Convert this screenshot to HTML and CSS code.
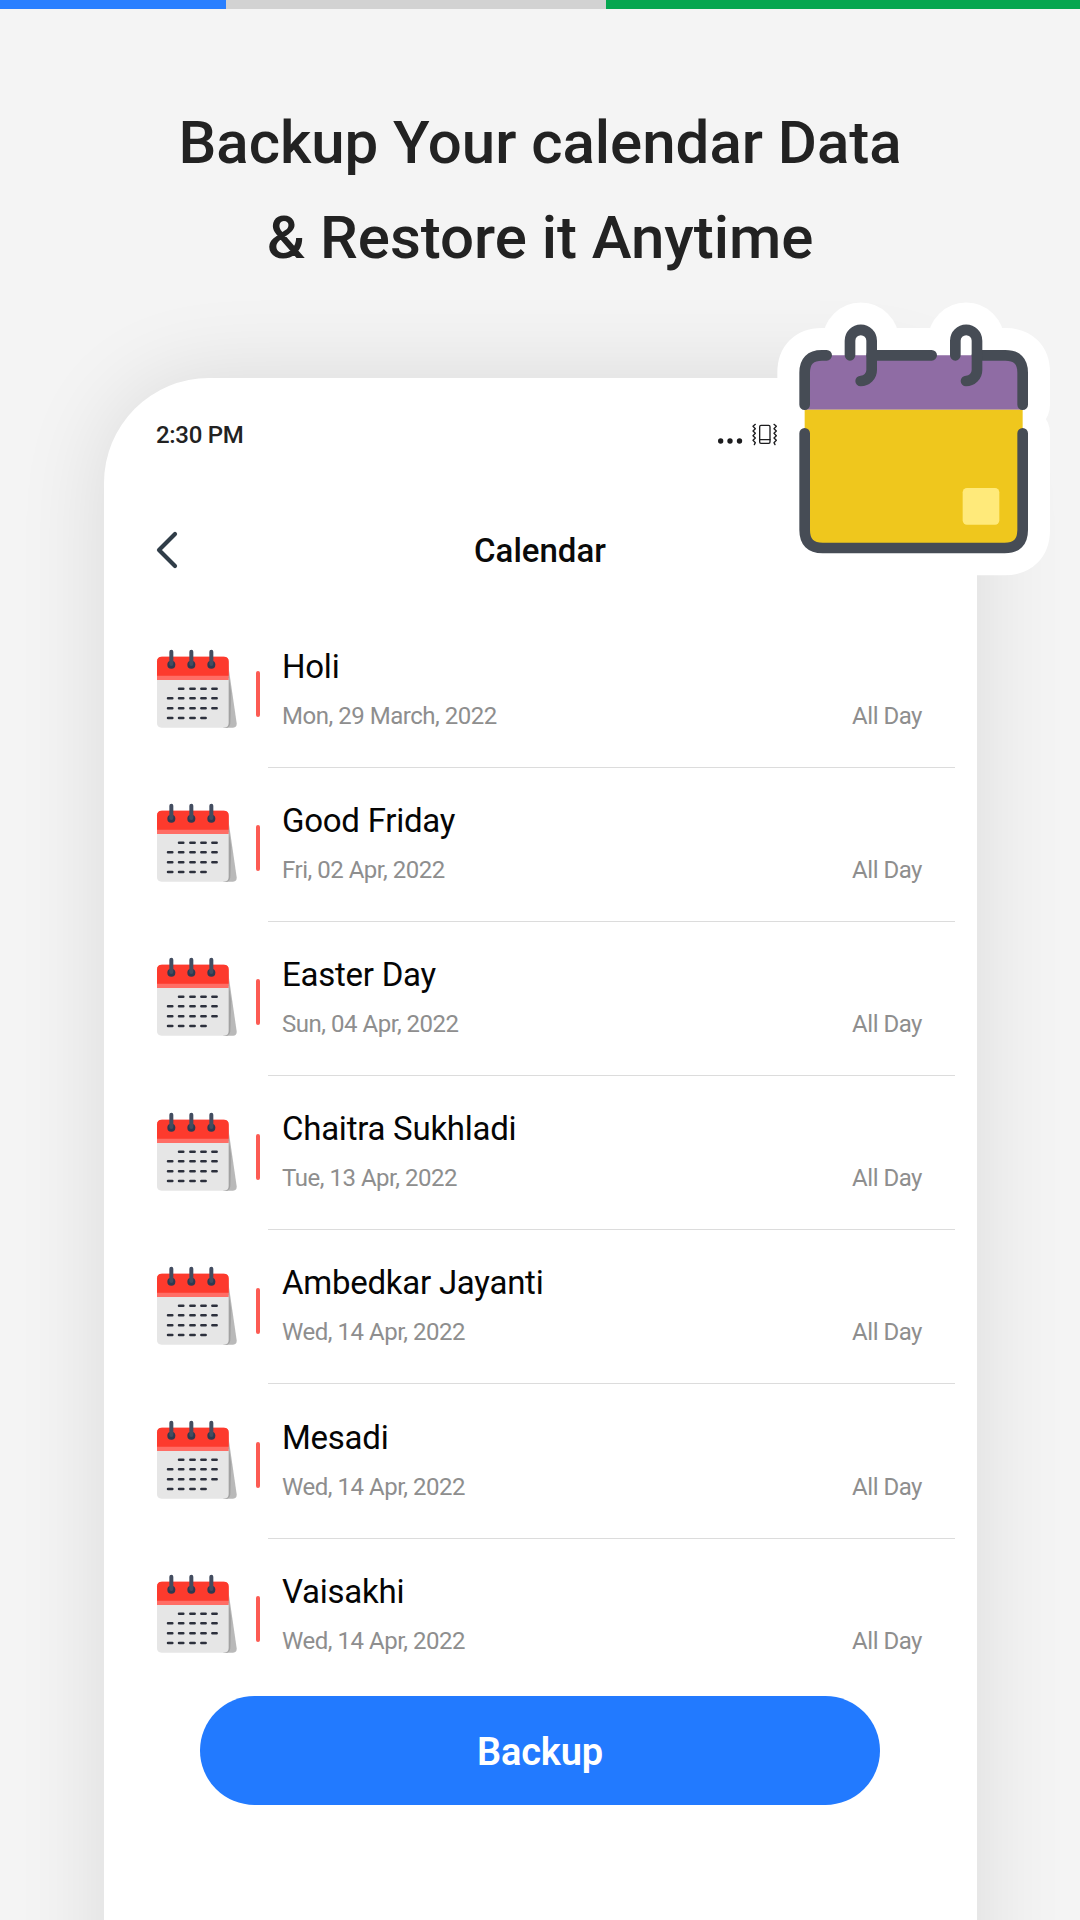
FILE: index.html
```html
<!DOCTYPE html>
<html lang="en">
<head>
<meta charset="utf-8">
<title>Calendar Backup</title>
<link rel="stylesheet" href="styles.css">
</head>
<body>
<svg class="defs" aria-hidden="true">
  <symbol id="cal" viewBox="48 54 246 246">
    <path d="M258 90 L264 100 L290 280 Q291 293 279 293 H250 Z" fill="#b9b9b9"/>
    <path d="M264 120 L274 190 L271 280 Q269 291 262 293 L250 293 Z" fill="#a2a2a2"/>
    <path d="M51 145 H266 V279 Q266 293 252 293 H65 Q51 293 51 279 Z" fill="#e6e6e6"/>
    <path d="M51 150 V95 Q51 80 66 80 H251 Q266 80 266 95 V150 Z" fill="#ff6d65"/>
    <path d="M51 137 V95 Q51 80 66 80 H251 Q266 80 266 95 V137 Z" fill="#fd3a2d"/>
    <g fill="#2f3a50"><circle cx="94" cy="104" r="12"/><circle cx="154" cy="104" r="12"/><circle cx="214" cy="104" r="12"/></g>
    <path d="M94 65V102M154 65V102M214 65V102" stroke="#434d60" stroke-width="12" stroke-linecap="round"/>
    <path d="M117 176h13M151 176h13M184 176h13M217 176h13M84 205h13M117 205h13M151 205h13M184 205h13M217 205h13M84 235h13M117 235h13M151 235h13M184 235h13M217 235h13M84 264h13M117 264h13M151 264h13M184 264h13" stroke="#2c303c" stroke-width="7.5" stroke-linecap="round"/>
  </symbol>
</svg>
<div class="stripe"><i class="blue"></i><i class="gray"></i><i class="green"></i></div>
<h1 class="headline">Backup Your calendar Data<br>&amp; Restore it Anytime</h1>
<div class="stage">
<main class="phone">
  <div class="status">
    <span class="time">2:30 PM</span>
    <svg class="status-icons" viewBox="0 0 180 70">
      <g fill="#1c1c1e"><circle cx="8" cy="54" r="8"/><circle cx="36" cy="54" r="8"/><circle cx="64.500" cy="54" r="8"/></g>
      <g fill="none" stroke="#1c1c1e" stroke-width="4" stroke-linejoin="round" stroke-linecap="round">
        <rect x="125" y="7" width="31" height="54" rx="4"/><path d="M125 50H156"/>
        <path d="M112 4L105 10L112 17L105 24L112 31L105 38L112 45L105 52L112 59L109 65M168 4L175 10L168 17L175 24L168 31L175 38L168 45L175 52L168 59L171 65"/>
      </g>
    </svg>
  </div>
  <header class="bar">
    <svg class="back" viewBox="0 0 22 38"><path d="M19 3L3 19L19 35" fill="none" stroke="#303d48" stroke-width="4.200" stroke-linecap="round" stroke-linejoin="round"/></svg>
    <h2>Calendar</h2>
  </header>
  <ul class="events">
    <li><svg class="cal"><use href="#cal"/></svg><i class="mark"></i><div class="body"><div><h3>Holi</h3><p>Mon, 29 March, 2022</p></div><p>All Day</p></div></li>
    <li><svg class="cal"><use href="#cal"/></svg><i class="mark"></i><div class="body"><div><h3>Good Friday</h3><p>Fri, 02 Apr, 2022</p></div><p>All Day</p></div></li>
    <li><svg class="cal"><use href="#cal"/></svg><i class="mark"></i><div class="body"><div><h3>Easter Day</h3><p>Sun, 04 Apr, 2022</p></div><p>All Day</p></div></li>
    <li><svg class="cal"><use href="#cal"/></svg><i class="mark"></i><div class="body"><div><h3>Chaitra Sukhladi</h3><p>Tue, 13 Apr, 2022</p></div><p>All Day</p></div></li>
    <li><svg class="cal"><use href="#cal"/></svg><i class="mark"></i><div class="body"><div><h3>Ambedkar Jayanti</h3><p>Wed, 14 Apr, 2022</p></div><p>All Day</p></div></li>
    <li><svg class="cal"><use href="#cal"/></svg><i class="mark"></i><div class="body"><div><h3>Mesadi</h3><p>Wed, 14 Apr, 2022</p></div><p>All Day</p></div></li>
    <li><svg class="cal"><use href="#cal"/></svg><i class="mark"></i><div class="body"><div><h3>Vaisakhi</h3><p>Wed, 14 Apr, 2022</p></div><p>All Day</p></div></li>
  </ul>
  <button class="backup">Backup</button>
</main>
  <svg class="hero" viewBox="0 0 960 900">
    <defs>
      <g id="frame" fill="none" stroke-linecap="round" stroke-linejoin="round">
        <path d="M134 344V248Q134 196 186 196H200M335 196H515M651 196H736Q788 196 788 248V344M134 430V720Q134 774 188 774H734Q788 774 788 720V430"/>
        <path d="M270 196V152A32.500 32.500 0 0 1 335 152V240A33 33 0 0 1 302 273"/>
        <path d="M586 196V152A32.500 32.500 0 0 1 651 152V240A33 33 0 0 1 618 273"/>
      </g>
    </defs>
    <use href="#frame" stroke="#fff" stroke-width="164"/>
    <path d="M134 196H788V774H134Z" fill="#fff"/>
    <path d="M134 359V248Q134 196 186 196H736Q788 196 788 248V359Z" fill="#8f6ca4"/>
    <path d="M134 359H788V720Q788 774 734 774H188Q134 774 134 720Z" fill="#efc71d"/>
    <use href="#frame" stroke="#464c55" stroke-width="32"/>
    <rect x="608" y="594" width="110" height="110" rx="13" fill="#ffea7a"/>
  </svg>
</div>
</body>
</html>
```
FILE: styles.css
```css
* { box-sizing: border-box; margin: 0; padding: 0; }
html { height: 1920px; overflow: hidden; }
body {
  width: 1080px;
  height: 1920px;
  overflow: hidden;
  background: #f4f4f4;
  font-family: Roboto, "Liberation Sans", sans-serif;
  color: #222;
}
.defs { display: none; }
.stripe { display: flex; height: 9px; }
.blue { width: 226px; background: #297fff; }
.gray { width: 380px; background: #d2d2d2; }
.green { flex: 1; background: #06a650; }
.headline {
  height: 241px;
  padding-top: 86px;
  text-align: center;
  font-size: 60px;
  font-weight: 500;
  line-height: 95px;
  letter-spacing: -.03px;
}
/* Clips the card, which runs on past the bottom of the page. */
.stage {
  position: relative;
  height: 1670px;
  padding: 128px 103px 0 104px;
  overflow: hidden;
}
.phone {
  height: 1660px;
  padding: 0 22px 0 52px;
  border-radius: 105px 105px 0 0;
  background: #fff;
  box-shadow: 0 0 90px rgba(0, 0, 0, .11);
}
.hero {
  position: absolute;
  left: 760px;
  top: 40px;
  width: 320px;
  height: 300px;
}
.status {
  display: flex;
  align-items: center;
  height: 114px;
  font-size: 24px;
  font-weight: 500;
  letter-spacing: -.3px;
}
.time { width: 562px; }
.status-icons { width: 60px; height: 23.33px; }
.bar {
  display: grid;
  grid-template-columns: 22px 1fr 22px;
  align-items: center;
  height: 116px;
  margin-right: 31px;
}
.back { width: 22px; height: 38px; }
.bar h2 {
  padding-top: 1px;
  text-align: center;
  font-size: 33px;
  font-weight: 500;
  line-height: 40px;
  color: #0a0a0a;
}
.events { margin-top: 5px; list-style: none; }
.events li { display: flex; height: 154.2px; }
.cal { width: 82px; height: 82px; margin-top: 35px; }
.mark {
  width: 4px;
  height: 46px;
  margin: 58px 8px 0 18px;
  border-radius: 2px;
  background: #fc5b53;
}
.body {
  flex: 1;
  display: flex;
  justify-content: space-between;
  align-items: flex-end;
  height: 154.7px;
  padding: 0 33px 36px 14px;
  border-bottom: 1.5px solid #dcdcdc;
}
.events li:last-child .body { border-color: transparent; }
.body h3 {
  margin-bottom: 14px;
  font-size: 33px;
  font-weight: 400;
  line-height: 40px;
  letter-spacing: -.25px;
  color: #050505;
}
.body p {
  font-size: 24px;
  line-height: 30px;
  letter-spacing: -.48px;
  color: #8e8e8e;
}
.backup {
  display: block;
  width: 680px;
  height: 109px;
  margin: 3.6px 0 0 44px;
  padding-top: 3px;
  border: 0;
  border-radius: 55px;
  background: #227aff;
  color: #fff;
  font: 600 38px Roboto, sans-serif;
  letter-spacing: -.2px;
}
```
